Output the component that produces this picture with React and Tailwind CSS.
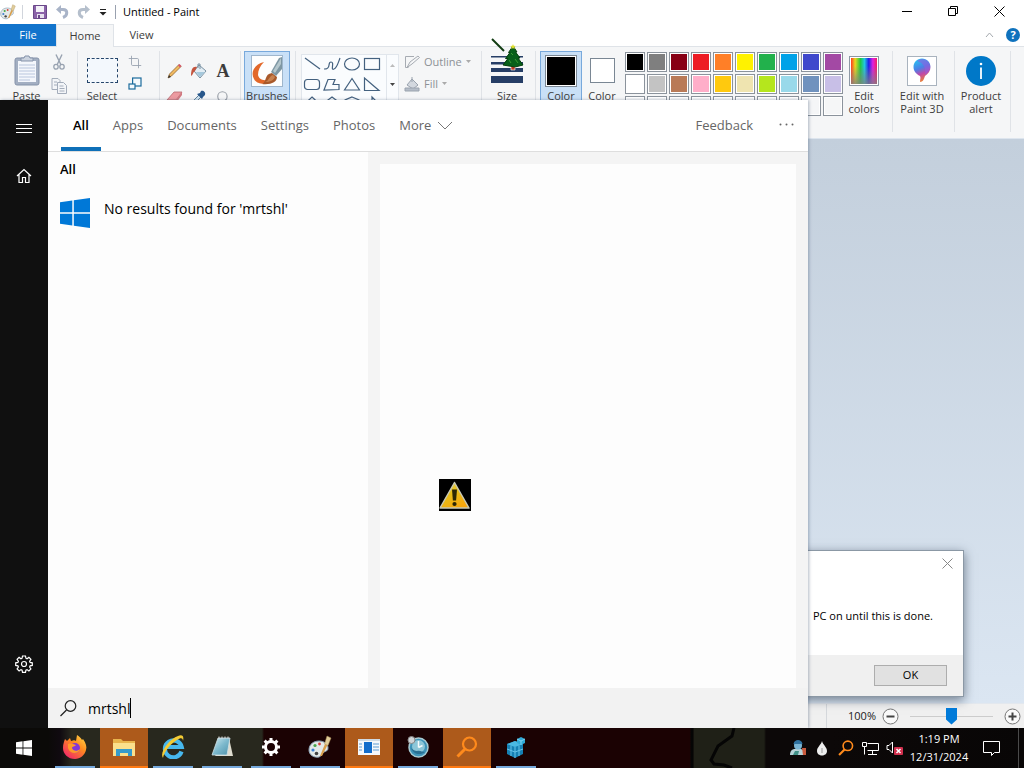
import { useState } from "react";
import { Settings, Crop, Search } from "lucide-react";

const palette = [
  ["#000000", "#7f7f7f", "#880015", "#ed1c24", "#ff7f27", "#fff200", "#22b14c", "#00a2e8", "#3f48cc", "#a349a4"],
  ["#ffffff", "#c3c3c3", "#b97a57", "#ffaec9", "#ffc90e", "#efe4b0", "#b5e61d", "#99d9ea", "#7092be", "#c8bfe7"],
  ["#f5f6f7", "#f5f6f7", "#f5f6f7", "#f5f6f7", "#f5f6f7", "#f5f6f7", "#f5f6f7", "#f5f6f7", "#f5f6f7", "#f5f6f7"],
];

const searchTabs = ["All", "Apps", "Documents", "Settings", "Photos"];

/* ---------- small drawings ---------- */

function WindowsLogo({ className }) {
  return (
    <svg viewBox="0 0 30 30" className={className} fill="currentColor">
      <path d="M0 4.2 12.3 2.5V14.2H0zM13.8 2.3 30 0V14.2H13.8zM0 15.8H12.3V27.5L0 25.8zM13.8 15.8H30V30L13.8 27.7z" />
    </svg>
  );
}

function PaintIcon({ className }) {
  return (
    <svg viewBox="0 0 24 24" className={className}>
      <path d="M1 15C1 9 6 6 11 6c5 0 9 3 9 7 0 3-2 3-4 4-2 1-2 4-5 5C6 23 1 20 1 15z" fill="#e4e9e8" stroke="#8ba2b5" />
      <circle cx="5" cy="15" r="1.6" fill="#3d7fd0" />
      <circle cx="7" cy="10.5" r="1.6" fill="#4aa64c" />
      <circle cx="11.500" cy="9" r="1.4" fill="#d8423c" />
      <circle cx="8.500" cy="18.500" r="1.8" fill="#444" />
      <path d="M12 21 17 9l2.500 1-5.500 11z" fill="#d99f4c" />
      <path d="M16.500 9 19 1l4 2-3 7.500z" fill="#e0cd9a" stroke="#a98c55" strokeWidth=".5" />
    </svg>
  );
}

function PasteIcon() {
  return (
    <svg width="26" height="32" viewBox="0 0 26 32">
      <rect x="1" y="3" width="24" height="27" rx="2" fill="#a3afc2" stroke="#8593aa" />
      <rect x="4" y="6" width="18" height="21" fill="#f4f7fc" />
      <path d="M5 10h16M5 13h16M5 16h16M5 19h16M5 22h16M5 25h11" stroke="#b9c6dd" />
      <path d="M7 6V3h3l1-2h4l1 2h3v3z" fill="#cbd3df" stroke="#8593aa" />
    </svg>
  );
}

function CutIcon() {
  return (
    <svg width="12" height="16" viewBox="0 0 12 16" fill="none" stroke="#98a2b0">
      <path d="M3 .5 8 11M9 .5 4 11" strokeWidth="1.400" />
      <ellipse cx="3" cy="12.800" rx="2.200" ry="2.400" strokeWidth="1.300" />
      <ellipse cx="9" cy="12.800" rx="2.200" ry="2.400" strokeWidth="1.300" />
    </svg>
  );
}

function CopyIcon() {
  return (
    <svg width="16" height="16" viewBox="0 0 16 16" fill="#f3f5f8" stroke="#a3acba">
      <path d="M1 .5h6l2 2v9H1z" />
      <path d="M6.500 4.500h6l3 3v8h-9z" />
      <path d="M8.500 8h4M8.500 10.500h5M8.500 13h5M3 4h3M3 7h3" />
    </svg>
  );
}

function ResizeIcon() {
  return (
    <svg width="14" height="14" viewBox="0 0 14 14" fill="#f5f9fd" stroke="#1b6b9c" strokeWidth="1.2">
      <rect x="4.600" y="1" width="8.400" height="8" />
      <rect x="1" y="7" width="6" height="5" />
    </svg>
  );
}

function PencilIcon() {
  return (
    <svg width="16" height="16" viewBox="0 0 16 16">
      <path d="M1 15 2.500 11 12 1.500l2 2L4.500 13z" fill="#f0b960" stroke="#8f6530" strokeWidth=".8" />
      <path d="M11 2.500l2 2 1.500-1.500-2-2z" fill="#d6566c" />
      <path d="M1 15l1-3 2 2z" fill="#333" />
    </svg>
  );
}

function BucketIcon() {
  return (
    <svg width="18" height="16" viewBox="0 0 18 16">
      <path d="M9 2 16 8 10 15 4 8z" fill="#e2edf4" stroke="#7890a1" />
      <path d="M6 9h9l-5 5z" fill="#a5c8dc" />
      <path d="M8 5V1h2v5" fill="none" stroke="#7890a1" />
      <path d="M7 4C3 3 1 6 1 13c2-1 2-4 4-5z" fill="#c4553f" />
    </svg>
  );
}

function EraserIcon() {
  return (
    <svg width="18" height="14" viewBox="0 0 18 14">
      <path d="M1 10 8 2h8l-6 8z" fill="#ec9aa0" stroke="#b96a70" strokeWidth=".8" />
      <path d="M1 10h9v3H1zM10 10l6-8v3l-6 8z" fill="#d2777f" />
    </svg>
  );
}

function PickerIcon() {
  return (
    <svg width="14" height="14" viewBox="0 0 14 14">
      <path d="M1 13 2 10 7 5l2 2-5 5z" fill="#cfe4f2" stroke="#62829a" />
      <path d="M5 4 10 9 11 7l2-2c1-3-2-5-4-4L8 3z" fill="#28578b" />
    </svg>
  );
}

function BrushIcon() {
  return (
    <svg width="32" height="32" viewBox="0 0 32 32">
      <rect x=".5" y=".5" width="31" height="31" fill="#fdfefe" stroke="#9fb6cc" />
      <path d="M13 7C4 9-1 17 3 24c3 6 12 6 16 1-5 1-11 0-12-5 0-5 2-9 6-13z" fill="#e2682a" />
      <path d="M11 29c5-2 2-10 10-11l5 4c0 5-6 8-15 7z" fill="#a8592a" />
      <path d="M14 27c4-1 4-6 8-7l2 2c-1 3-5 5-10 5z" fill="#c98350" />
      <path d="M20 17 28 3l3-1v12l-6 7z" fill="#7e97a3" />
      <path d="M22 16 30 3v6l-6 9z" fill="#b5c7cd" />
    </svg>
  );
}

function ShapeGallery() {
  return (
    <svg width="84" height="66" viewBox="0 0 84 66" fill="none" stroke="#44617f" strokeWidth="1.200">
      <path d="M3 3 18 14" />
      <path d="M22 14c8 0 3-7 7-7 4 0-1 9 3 7 3-1 4-6 6-11" />
      <ellipse cx="50" cy="9" rx="7.500" ry="6" />
      <rect x="62.500" y="3.500" width="15" height="11" />
      <rect x="2.500" y="24.500" width="15" height="10" rx="3" />
      <path d="M22 35 26 24.500h7l-2 5h6v5z" />
      <path d="M50 23.500 57.500 35H42.500z" />
      <path d="M62.500 23V35.500H77z" />
      <path d="M10 42 17 48.500 10 55 3 48.500zM30 42l8 6-3 8h-10l-3-8zM50 42l7 3v8l-7 3-7-3v-8zM62 46h8v-4l7 7-7 7v-4h-8z" />
    </svg>
  );
}

function SizeIcon() {
  return (
    <svg width="34" height="30" viewBox="0 0 34 30" fill="#263e66">
      <path d="M1 0H33V1.500H1zM1 6H33V8.500H1zM1 12H33V16H1zM1 20H33V27H1z" />
    </svg>
  );
}

function RainbowIcon() {
  return (
    <svg width="30" height="30" viewBox="0 0 30 30">
      <defs>
        <linearGradient id="hues">
          <stop offset="0" stopColor="#ff3a20" />
          <stop offset=".16" stopColor="#e8d820" />
          <stop offset=".36" stopColor="#20c840" />
          <stop offset=".52" stopColor="#20c8e0" />
          <stop offset=".68" stopColor="#2020e8" />
          <stop offset=".84" stopColor="#e020e0" />
          <stop offset="1" stopColor="#f02060" />
        </linearGradient>
        <linearGradient id="fade" x2="0" y2="1">
          <stop offset=".3" stopColor="#808080" stopOpacity="0" />
          <stop offset="1" stopColor="#808080" stopOpacity=".8" />
        </linearGradient>
      </defs>
      <rect x=".5" y=".5" width="29" height="29" fill="#fff" stroke="#8d98a5" />
      <rect x="2" y="2" width="26" height="26" fill="url(#hues)" />
      <rect x="2" y="2" width="26" height="26" fill="url(#fade)" />
    </svg>
  );
}

function Paint3DIcon() {
  return (
    <svg width="30" height="30" viewBox="0 0 30 30">
      <defs>
        <linearGradient id="drop" x1=".3" x2=".6" y2="1">
          <stop offset="0" stopColor="#27c3f1" />
          <stop offset=".4" stopColor="#4d7fe6" />
          <stop offset=".65" stopColor="#c248a8" />
          <stop offset="1" stopColor="#f08a24" />
        </linearGradient>
      </defs>
      <rect x=".5" y=".5" width="29" height="29" fill="#fff" stroke="#a9b3be" />
      <path d="M15 2.500c5 0 8.500 4 8.500 8.500 0 4-2.500 7-5.500 9-1 3-2 6-5 6 0-3 1-4 0-6-4-2-6.500-5-6.500-9 0-4.500 3.500-8.500 8.500-8.500z" fill="url(#drop)" />
      <path d="M15 3c5 0 8 4 8 8 0 3-2 6-5 8 1-7-1-12-8-14 1-1 3-2 5-2z" fill="#8f5fe0" opacity=".6" />
    </svg>
  );
}

function TreePointer() {
  return (
    <svg width="36" height="34" viewBox="0 0 36 34">
      <path d="M1 1 13 13" stroke="#123d12" strokeWidth="2" />
      <path d="M20 28h4v4h-4z" fill="#c23a24" stroke="#fff" strokeWidth=".6" />
      <path d="M22 8 26 14 24.500 14 29 20 27 20 32 27 24 29 12 27 17 20.500 14.500 20.500 19 14.500 17.500 14.500z" fill="#07601a" stroke="#043f0c" />
      <path d="M20 15l2 2M18 22l2 3M24 21l3 4" stroke="#3a9c34" />
      <path d="M22 6l.7 1.800 2 .2-1.500 1.200.5 2-1.700-1.200-1.700 1.200.5-2-1.500-1.200 2-.2z" fill="#dede2c" />
    </svg>
  );
}

function WarningIcon() {
  return (
    <svg width="32" height="32" viewBox="0 0 32 32">
      <defs>
        <linearGradient id="amber" x2=".6" y2="1">
          <stop offset="0" stopColor="#dfd35c" />
          <stop offset=".5" stopColor="#e8bd18" />
          <stop offset="1" stopColor="#f6a70d" />
        </linearGradient>
      </defs>
      <rect width="32" height="32" fill="#000" />
      <path d="M15.500 3.500 30 29H1z" fill="url(#amber)" stroke="#c9c9b4" strokeWidth="1.500" strokeLinejoin="round" />
      <path d="M13 10.500h5l-.9 11h-3.200z" fill="#2b2604" />
      <circle cx="15.500" cy="25" r="2.100" fill="#2b2604" />
    </svg>
  );
}

/* ---------- taskbar drawings ---------- */

function FirefoxIcon() {
  return (
    <svg viewBox="0 0 24 24" className="size-6">
      <defs>
        <linearGradient id="fox" x1="1" x2=".2" y2="1">
          <stop offset="0" stopColor="#ffe14a" />
          <stop offset=".45" stopColor="#ff8a1f" />
          <stop offset="1" stopColor="#f0246c" />
        </linearGradient>
      </defs>
      <path d="M2 4l2 2 3-3 1 3c3-1 4-1 5 0l1-6c2 1 4 3 5 5l1-1c3 4 4 8 3 11-1 5-6 9-11 9C5 24 0 19 0 13c0-4 1-6 2-9z" fill="url(#fox)" />
      <circle cx="12" cy="13" r="5" fill="#8436d8" />
      <path d="M5 9c3-1 5 0 8 1-1 2-4 1-4 3 1 3 5 4 8 1-1 5-10 6-12-1z" fill="#ff9a2a" />
    </svg>
  );
}

function FolderIcon() {
  return (
    <svg viewBox="0 0 24 20" className="w-6">
      <path d="M1 2h8l2 2h12v15H1z" fill="#e9b44c" />
      <path d="M1 6h22v13H1z" fill="#fbe08c" />
      <path d="M4 19v-7h16v7h-4v-3H8v3z" fill="#359bcb" />
    </svg>
  );
}

function IeIcon() {
  return (
    <svg viewBox="0 0 24 24" className="size-6" fill="none">
      <path d="M20.500 16.500A8.500 8.500 0 1 1 20.700 12H6" stroke="#47b8ee" strokeWidth="4.200" />
      <path d="M2 23C-2 18 8 4 17 1c5-2 6 1 5 5 0-3-2-4-6-1C9 9 3 17 2 23z" fill="#f3cb35" />
    </svg>
  );
}

function NotepadIcon() {
  return (
    <svg viewBox="0 0 24 24" className="size-6">
      <defs>
        <linearGradient id="page" x1="0" x2="1" y2="1">
          <stop offset="0" stopColor="#d3ebf0" />
          <stop offset=".5" stopColor="#7db9cd" />
          <stop offset="1" stopColor="#4d92ab" />
        </linearGradient>
      </defs>
      <path d="M19 3l4 18H5z" fill="#dedccf" />
      <path d="M8 3h12l-3 17H2z" fill="url(#page)" stroke="#cfe0e4" strokeWidth=".8" />
      <path d="M9 1.500v2M12 1.500v2M15 1.500v2M18 1.500v2" stroke="#ddd" />
    </svg>
  );
}

function GearSolid() {
  return (
    <svg viewBox="0 0 20 20" className="size-5" fill="none" stroke="#fff">
      <circle cx="10" cy="10" r="5.500" strokeWidth="3" />
      <path d="M10 1v3M10 16v3M1 10h3M16 10h3M3.600 3.600l2.400 2.400M14 14l2.400 2.400M16.400 3.600l-2.400 2.400M3.600 16.400l2.400-2.400" strokeWidth="3" />
    </svg>
  );
}

function RunIcon() {
  return (
    <svg viewBox="0 0 22 16" className="w-[22px]">
      <rect width="22" height="16" fill="#f5f8fb" />
      <path d="M0 1h22" stroke="#cfd9e2" strokeWidth="2" />
      <rect x="6" y="3" width="8" height="11" fill="#136dcb" />
      <path d="M15 5h6M15 8h6M15 11h6M1 5h3M1 8h3M1 11h3" stroke="#5d9bd2" />
    </svg>
  );
}

function GlobeIcon() {
  return (
    <svg viewBox="0 0 22 22" className="size-[22px]">
      <circle cx="11.500" cy="11.500" r="9.500" fill="#3d93b8" stroke="#a9cbd3" strokeWidth="1.500" />
      <circle cx="11.500" cy="10.500" r="6.500" fill="#8cc6d8" />
      <path d="M11.500 11.500V5M11.500 11.500l4-2" stroke="#f4fbfc" strokeWidth="1.500" />
      <path d="M4 12c2 6 9 8 14 4-3 0-5-2-8-1-2 0-4-1-6-3z" fill="#2a6f92" />
      <circle cx="4.500" cy="4" r="3.500" fill="#cfd3d6" stroke="#888" />
    </svg>
  );
}

function Magnifier({ className }) {
  return (
    <svg viewBox="0 0 22 22" className={className} fill="none" stroke="#ff8a1c">
      <circle cx="13.500" cy="8" r="6.500" strokeWidth="2.200" />
      <path d="M9 13 1.500 20.500" strokeWidth="3" />
    </svg>
  );
}

function RegistryIcon() {
  return (
    <svg viewBox="0 0 22 22" className="size-[22px]">
      <path d="M2 8 10 5 18 8v10l-8 4-8-4z" fill="#1580b4" />
      <path d="M2 8l8 3 8-3-8-3z" fill="#4ab8e2" />
      <path d="M10 11v11M2 13l8 3 8-3M6 9.500v10.500M14 9.500v10.500" stroke="#66c4ea" fill="none" />
      <path d="M12 3l4-2 4 2v4l-4 2-4-2z" fill="#30a9d6" />
      <path d="M12 3l4 2 4-2M16 5v4" stroke="#93dcf5" fill="none" strokeWidth=".8" />
    </svg>
  );
}

const apps = [
  { name: "Firefox", icon: <FirefoxIcon /> },
  { name: "File Explorer", icon: <FolderIcon />, active: true },
  { name: "Internet Explorer", icon: <IeIcon /> },
  { name: "Notepad", icon: <NotepadIcon /> },
  { name: "Settings", icon: <GearSolid /> },
  { name: "Paint", icon: <PaintIcon className="size-6" /> },
  { name: "Run", icon: <RunIcon />, active: true },
  { name: "Internet Options", icon: <GlobeIcon /> },
  { name: "Search", icon: <Magnifier className="size-[22px]" />, active: true },
  { name: "Registry Editor", icon: <RegistryIcon /> },
];

/* ---------- paint window ---------- */

function TitleBar() {
  return (
    <header className="flex h-6 items-center bg-white">
      <PaintIcon className="size-4 shrink-0" />
      <span className="ml-1.5 h-3.5 w-px bg-gray-300" />
      <button aria-label="Save" className="ml-2.5">
        <svg width="14" height="14" viewBox="0 0 14 14">
          <path d="M.5.500h13v13H.5z" fill="#8a62a8" stroke="#6a4789" />
          <path d="M3 1h8v6H3z" fill="#f3f1f8" />
          <path d="M4 9h7v4H4z" fill="#e6e0ee" />
          <path d="M5 10h2v3H5z" fill="#6a4789" />
        </svg>
      </button>
      <button aria-label="Undo" className="ml-2">
        <svg width="14" height="14" viewBox="0 0 14 14" fill="none" stroke="#a9b4c8" strokeWidth="3">
          <path d="M3 4.500h5c5 0 5 6 0 8" />
          <path d="M6 0 1 4.500 6 9z" fill="#a9b4c8" stroke="none" />
        </svg>
      </button>
      <button aria-label="Redo" className="ml-2">
        <svg width="14" height="14" viewBox="0 0 14 14" fill="none" stroke="#b5bfcc" strokeWidth="3">
          <path d="M11 4.500H6c-5 0-5 6 0 8" />
          <path d="M8 0l5 4.500L8 9z" fill="#b5bfcc" stroke="none" />
        </svg>
      </button>
      <button aria-label="Customize Quick Access Toolbar" className="ml-2">
        <svg width="8" height="8" viewBox="0 0 8 8">
          <path d="M1 1.500h6" stroke="#222" />
          <path d="M.5 4h7L4 7.500z" fill="#222" />
        </svg>
      </button>
      <span className="ml-2 h-3.5 w-px bg-gray-400" />
      <h1 className="ml-[7px] text-[11px] text-black">Untitled - Paint</h1>
      <div className="ml-auto flex pr-0.5">
        <button aria-label="Minimize" className="flex h-6 w-[46px] items-center justify-center">
          <svg width="10" height="10" viewBox="0 0 10 10"><path d="M0 4.500h10" stroke="#000" /></svg>
        </button>
        <button aria-label="Restore" className="flex h-6 w-[46px] items-center justify-center">
          <svg width="10" height="12" viewBox="0 0 10 12" fill="none" stroke="#000">
            <path d="M.5 2.500h7v7h-7zM2.500 2.500v-2h7v7h-2" />
          </svg>
        </button>
        <button aria-label="Close" className="flex h-6 w-[46px] items-center justify-center">
          <svg width="11" height="13" viewBox="0 0 11 13"><path d="M.5.500l10 10M10.500.500l-10 10" stroke="#000" /></svg>
        </button>
      </div>
    </header>
  );
}

function RibbonTabs() {
  return (
    <nav className="flex h-[23px] items-stretch border-b border-[#dfe3e8] bg-white text-[11px] text-[#3c3c3c]">
      <button className="w-14 bg-[#1274cc] text-white">File</button>
      <button className="-mb-px w-[58px] border border-b-0 border-[#dfe3e8] bg-[#f5f6f7]">Home</button>
      <button className="w-[55px]">View</button>
      <div className="ml-auto flex items-center gap-3 pr-1">
        <svg width="9" height="6" viewBox="0 0 9 6" fill="none" stroke="#a4a9ae"><path d="M1 5 4.500 1 8 5" /></svg>
        <button aria-label="Help" className="flex size-3.5 items-center justify-center rounded-full bg-[#0f72bd] text-[11px] leading-3 font-bold text-white">
          ?
        </button>
      </div>
    </nav>
  );
}

function Group({ className, children }) {
  return <div className={`flex h-[81px] shrink-0 items-start border-r border-[#e0e3e7] ${className}`}>{children}</div>;
}

function BigButton({ icon, label, className, selected }) {
  return (
    <button
      className={`flex h-[70px] shrink-0 flex-col items-center border text-center text-[11px] leading-[13px] ${
        selected ? "border-[#78a9dc] bg-[#c9e0f7]" : "border-transparent"
      } ${className}`}>
      <span className="flex h-[37px] shrink-0 items-center">{icon}</span>
      {label}
    </button>
  );
}

function Ribbon() {
  return (
    <div className="flex h-[92px] overflow-hidden border-b border-[#dde5ee] bg-[#f5f6f7] pt-1 text-[#3c3c3c]">
      <Group className="w-[78px] pl-1">
        <BigButton icon={<PasteIcon />} label="Paste" className="w-[45px]" />
        <div className="flex flex-col items-center gap-2 pt-[3px] pl-0.5">
          <CutIcon />
          <CopyIcon />
        </div>
      </Group>

      <Group className="w-[82px] pl-0.5">
        <BigButton
          icon={<span className="h-[25px] w-[31px] border border-dashed border-[#26466b] bg-[#f3f8fd]" />}
          label="Select"
          className="w-11"
        />
        <div className="flex flex-col items-center gap-2 pt-1 pl-1">
          <Crop className="size-3.5 text-[#98a2b0]" strokeWidth={1.5} />
          <ResizeIcon />
        </div>
      </Group>

      <Group className="w-[81px] pl-[3px]">
        <div className="grid grid-cols-3 pt-[7px]">
          <button aria-label="Pencil" className="flex h-[26px] w-6 items-center justify-center"><PencilIcon /></button>
          <button aria-label="Fill with color" className="flex h-[26px] w-6 items-center justify-center"><BucketIcon /></button>
          <button aria-label="Text" className="flex h-[26px] w-6 items-center justify-center font-['Liberation_Serif',serif] text-lg font-bold">A</button>
          <button aria-label="Eraser" className="flex h-[26px] w-6 items-center justify-center"><EraserIcon /></button>
          <button aria-label="Color picker" className="flex h-[26px] w-6 items-center justify-center"><PickerIcon /></button>
          <button aria-label="Magnifier" className="flex h-[26px] w-6 items-center justify-center">
            <Search className="size-3.5 text-[#9aa0a8]" />
          </button>
        </div>
      </Group>

      <Group className="w-[55px] pl-[3px]">
        <BigButton icon={<BrushIcon />} label="Brushes" className="w-[46px]" selected />
      </Group>

      <Group className="w-[186px] pl-[5px]">
        <div className="mt-[3px] flex border border-[#e1e6ec] bg-[#fafcfe]">
          <ShapeGallery />
          <div className="flex w-3 flex-col items-center gap-4 border-l border-[#e1e6ec] pt-2 text-[#555]">
            <svg width="5" height="4" viewBox="0 0 5 4" fill="#bbb"><path d="M0 4 2.500 1 5 4z" /></svg>
            <svg width="5" height="4" viewBox="0 0 5 4" fill="#444"><path d="M0 0h5L2.500 3z" /></svg>
          </div>
        </div>
        <div className="flex flex-col pl-[5px] text-[11px] text-[#8d9196]">
          <button className="flex h-[22px] items-center gap-1">
            <svg width="16" height="14" viewBox="0 0 16 14" fill="none" stroke="#a6abb2">
              <path d="M10 1.500H1.500v11h3M3 12.500 6 7l8-6 1.500 1.500L8 9z" />
            </svg>
            Outline
            <svg width="5" height="4" viewBox="0 0 5 4" fill="#aaa"><path d="M0 0h5L2.500 3z" /></svg>
          </button>
          <button className="flex h-[22px] items-center gap-1">
            <svg width="16" height="15" viewBox="0 0 16 15" fill="#d3d8df" stroke="#9aa3ae">
              <path d="M8 2 14 8 9 12 3 8z" />
              <path d="M1 11h14v3H1z" fill="#b5bdc8" />
              <path d="M8 5V0" />
            </svg>
            Fill
            <svg width="5" height="4" viewBox="0 0 5 4" fill="#aaa"><path d="M0 0h5L2.500 3z" /></svg>
          </button>
        </div>
      </Group>

      <Group className="w-[54px] pl-0.5">
        <BigButton icon={<SizeIcon />} label="Size" className="w-[46px]" />
      </Group>

      <Group className="w-[357px] pl-1">
        <BigButton
          icon={
            <span className="size-8 border border-[#7a8794] bg-white p-px">
              <span className="block size-full bg-black" />
            </span>
          }
          label="Color"
          className="w-[42px]"
          selected
        />
        <BigButton
          icon={<span className="size-[25px] border border-[#7a8794] bg-white" />}
          label="Color"
          className="w-10"
        />
        <div className="ml-[3px] grid grid-cols-10 gap-0.5 pt-px">
          {palette.flat().map((color, i) => (
            <button
              key={i}
              aria-label={`Color ${color}`}
              className="size-5 border border-[#8b939c] bg-white p-px">
              <span className="block size-full" style={{ backgroundColor: color }} />
            </button>
          ))}
        </div>
        <BigButton icon={<RainbowIcon />} label="Edit colors" className="w-[42px]" />
      </Group>

      <Group className="w-[62px]">
        <BigButton icon={<Paint3DIcon />} label="Edit with Paint 3D" className="w-[58px]" />
      </Group>

      <Group className="w-14">
        <BigButton
          icon={
            <svg width="30" height="30" viewBox="0 0 30 30">
              <circle cx="15" cy="15" r="15" fill="#0078c8" />
              <circle cx="15" cy="8" r="1.300" fill="#fff" />
              <path d="M15 11.500V23" stroke="#fff" strokeWidth="1.800" />
            </svg>
          }
          label="Product alert"
          className="w-[52px]"
        />
      </Group>
    </div>
  );
}

function Dialog() {
  return (
    <div
      role="dialog"
      aria-label="Message"
      className="absolute right-[60px] bottom-1.5 flex h-[147px] w-[380px] flex-col border border-[#8b98a5] bg-white text-[11px] text-black shadow-[0_3px_10px_rgba(40,55,75,0.6)]">
      <div className="flex h-6 items-center justify-end pr-2.5">
        <button aria-label="Close">
          <svg width="11" height="11" viewBox="0 0 11 11"><path d="M.5.500l10 10M10.500.500l-10 10" stroke="#888" /></svg>
        </button>
      </div>
      <p className="flex-1 pt-[33px] pr-[30px] text-right">PC on until this is done.</p>
      <div className="flex h-[41px] items-center justify-end bg-[#f0f0f0] pr-4">
        <button className="h-[21px] w-[73px] border border-[#adadad] bg-[#e1e1e1]">OK</button>
      </div>
    </div>
  );
}

function StatusBar() {
  const [zoom, setZoom] = useState(50);
  return (
    <footer className="flex h-[25px] items-center justify-end border-t border-[#e3e8ee] bg-[#f0f0f0] pr-[3px] text-xs text-[#222]">
      <span className="mr-[21px] h-full w-px bg-[#d5d8dc]" />
      <label htmlFor="zoom" className="text-[11px]">100%</label>
      <button aria-label="Zoom out" className="ml-1.5">
        <svg width="17" height="17" viewBox="0 0 17 17" fill="#fafafa" stroke="#777">
          <circle cx="8.500" cy="8.500" r="7.500" />
          <path d="M4.500 8.500h8" stroke="#444" strokeWidth="2" />
        </svg>
      </button>
      <input
        id="zoom"
        type="range"
        value={zoom}
        onChange={(e) => setZoom(e.target.value)}
        className="mx-[11px] h-[18px] w-[83px] appearance-none bg-[linear-gradient(#ccc,#ccc)] bg-[length:100%_1px] bg-center bg-no-repeat [&::-webkit-slider-thumb]:h-[17px] [&::-webkit-slider-thumb]:w-[11px] [&::-webkit-slider-thumb]:appearance-none [&::-webkit-slider-thumb]:bg-[#007ad9] [&::-webkit-slider-thumb]:[clip-path:polygon(0_0,100%_0,100%_70%,50%_100%,0_70%)]"
      />
      <button aria-label="Zoom in">
        <svg width="17" height="17" viewBox="0 0 17 17" fill="#fafafa" stroke="#777">
          <circle cx="8.500" cy="8.500" r="7.500" />
          <path d="M4.500 8.500h8M8.500 4.500v8" stroke="#444" strokeWidth="2" />
        </svg>
      </button>
    </footer>
  );
}

/* ---------- search flyout ---------- */

function SearchPanel() {
  const [query, setQuery] = useState("mrtshl");

  return (
    <section className="absolute top-[100px] bottom-0 left-0 flex w-[808px] shadow-[1px_0_3px_rgba(60,80,110,0.4)]">
      <aside className="flex w-12 flex-col bg-[#101010] pt-1 pb-10 text-white">
        <button aria-label="Menu" className="flex size-12 items-center justify-center">
          <svg width="16" height="10" viewBox="0 0 16 10" stroke="#fff"><path d="M0 1.500h16M0 5.500h16M0 9.500h16" /></svg>
        </button>
        <button aria-label="Home" className="flex size-12 items-center justify-center">
          <svg width="16" height="16" viewBox="0 0 16 16" fill="none" stroke="#fff" strokeWidth="1.200">
            <path d="M1 8 8 1.500 15 8M3 6.500v8h3.500v-5h3v5H13v-8" />
          </svg>
        </button>
        <button aria-label="Settings" className="mt-auto flex size-12 items-center justify-center">
          <svg width="18" height="18" viewBox="0 0 18 18" fill="none" stroke="#fff" strokeWidth="1.200">
            <path d="M7.500 1h3l.4 2.200 1.100.5 1.900-1.300 2 2-1.300 1.900.5 1.100 2.200.4v2.600l-2.200.4-.5 1.200 1.300 1.900-2 2-1.900-1.300-1.100.5-.4 2.200h-3l-.4-2.200-1.100-.5-1.900 1.300-2-2 1.300-1.900-.5-1.200L.7 10.400V7.800l2.200-.4.500-1.100-1.300-1.900 2-2L6 3.700l1.100-.5z" />
            <circle cx="9" cy="9" r="2.500" />
          </svg>
        </button>
      </aside>

      <div className="flex flex-1 flex-col bg-[#f4f4f4]">
        <nav className="flex h-[52px] items-stretch border-b border-[#dedede] bg-white pl-[13px] text-[13px] text-[#666]">
          {searchTabs.map((tab) => (
            <button
              key={tab}
              className={`border-b-4 px-3 pt-1 ${
                tab === "All" ? "border-[#0f70b8] font-semibold text-black" : "border-transparent"
              }`}>
              {tab}
            </button>
          ))}
          <button className="flex items-center gap-1.5 px-3">
            More
            <svg width="16" height="9" viewBox="0 0 16 9" fill="none" stroke="#777"><path d="M1 1l7 7 7-7" /></svg>
          </button>
          <button className="ml-auto">Feedback</button>
          <button aria-label="More options" className="mr-3.5 ml-[26px]">
            <svg width="15" height="5" viewBox="0 0 15 5" fill="#666">
              <circle cx="1.500" cy="1.500" r="1" /><circle cx="7.500" cy="1.500" r="1" /><circle cx="13.500" cy="1.500" r="1" />
            </svg>
          </button>
        </nav>

        <div className="flex flex-1">
          <div className="w-80 bg-[#fdfdfd] pt-2 pl-3 text-black">
            <h2 className="text-[13px] leading-[18px] font-semibold">All</h2>
            <div className="mt-5 flex gap-3.5">
              <WindowsLogo className="size-[30px] text-[#0078d7]" />
              <p className="text-[14px] leading-[22px]">No results found for 'mrtshl'</p>
            </div>
          </div>
          <div className="mx-3 mt-3 flex-1 bg-[#fdfdfd]" />
        </div>

        <div className="flex h-10 items-center bg-[#f2f2f2] pl-3">
          <svg width="17" height="17" viewBox="0 0 17 17" fill="none" stroke="#222" strokeWidth="1.200">
            <circle cx="10.500" cy="6" r="5.300" />
            <path d="M6.500 10 .500 16" />
          </svg>
          <input
            aria-label="Search"
            value={query}
            onChange={(e) => setQuery(e.target.value)}
            className="ml-[11px] field-sizing-content bg-transparent text-[14px] text-black outline-none"
          />
          <span className="h-5 w-px bg-black" />
        </div>
      </div>
    </section>
  );
}

/* ---------- taskbar ---------- */

function Taskbar() {
  return (
    <div className="relative flex h-10 items-stretch bg-[linear-gradient(90deg,#0b0a08_0_48px,#100a10_60px,#28281e_72px_262px,#1b0203_264px_690px,#1f2017_694px_764px,#0c0808_766px_830px,#080606_100%)]">
      <svg width="60" height="40" viewBox="0 0 60 40" className="absolute left-[690px]" fill="none" stroke="#050505" strokeWidth="3">
        <path d="M44 0l-2 8-14 10-7 14 3 4 10 1 8 3M2 0v40" />
      </svg>
      <button aria-label="Start" className="mr-[3px] flex w-12 items-center justify-center">
        <WindowsLogo className="size-4 text-white" />
      </button>
      <div className="flex gap-px">
        {apps.map(({ name, icon, active }) => (
          <button
            key={name}
            aria-label={name}
            className={`flex w-12 flex-col items-center ${active ? "bg-[#ad5a1b]" : ""}`}>
            <span className="flex flex-1 items-center">{icon}</span>
            <span className={active ? "h-0.5 w-full bg-[#ff7a12]" : "h-0.5 w-10 bg-[#76a9dc]"} />
          </button>
        ))}
      </div>

      <div className="relative ml-auto flex items-center text-white">
        <span className="flex w-6 justify-center">
          <svg width="17" height="16" viewBox="0 0 17 16">
            <path d="M0 15c0-4 2-6 5-6h5c3 0 5 2 5 6z" fill="#b6d2d8" />
            <circle cx="8" cy="5.500" r="4" fill="#79b4d4" />
            <path d="M3.500 4C4 1 6 0 8 0s4 1 4.500 4z" fill="#2f719f" />
            <path d="M3 15l2-4h4l-1 4z" fill="#3f8f86" />
            <path d="M12 8h4v7h-3z" fill="#c95a3d" />
          </svg>
        </span>
        <span className="flex w-6 justify-center">
          <svg width="12" height="15" viewBox="0 0 12 15">
            <path d="M6 0c1 4 5 6 5 10 0 6-10 6-10 0 0-4 4-6 5-10z" fill="#eee" />
            <path d="M6 7v5" stroke="#999" />
          </svg>
        </span>
        <span className="flex w-6 justify-center"><Magnifier className="size-4" /></span>
        <span className="flex w-6 justify-center">
          <svg width="17" height="15" viewBox="0 0 17 15" fill="none" stroke="#fff">
            <path d="M5.500 2.500h11v7h-11M10.500 9.500v4M6 13.500h9M.5 1.500h4v4h-4zM2.500 5.500v8" />
          </svg>
        </span>
        <span className="flex w-6 justify-center">
          <svg width="17" height="14" viewBox="0 0 17 14" fill="none" stroke="#fff">
            <path d="M1 4.500h2L6.500 1v11L3 8.500H1z" />
            <rect x="8" y="6" width="9" height="8" rx="1" fill="#d12f4d" stroke="none" />
            <path d="M10.500 8l4 4M14.500 8l-4 4" strokeWidth="1.500" />
          </svg>
        </span>
        <div className="w-[66px] text-center text-[11px] leading-[18px]">
          <p>1:19 PM</p>
          <p>12/31/2024</p>
        </div>
        <button aria-label="Notifications" className="flex w-[38px] justify-center">
          <svg width="17" height="17" viewBox="0 0 17 17" fill="none" stroke="#fff">
            <path d="M.5 1.500h16v11h-5l-3 3v-3h-8z" />
          </svg>
        </button>
        <span className="mr-[5px] ml-2 h-full w-px bg-[#4a4a4a]" />
      </div>
    </div>
  );
}

export default function App() {
  return (
    <div className="flex h-screen min-h-[500px] flex-col overflow-hidden font-['Open_Sans','Noto_Sans',sans-serif]">
      <main className="relative flex flex-1 flex-col">
        <TitleBar />
        <RibbonTabs />
        <Ribbon />
        <div className="relative flex-1 bg-linear-to-b from-[#c3cfdc] to-[#dbe6f2]">
          <Dialog />
        </div>
        <StatusBar />
        <SearchPanel />

        <div className="pointer-events-none absolute top-[38px] left-[491px]">
          <TreePointer />
        </div>
        <div className="absolute top-[479px] left-[439px]">
          <WarningIcon />
        </div>
      </main>
      <Taskbar />
    </div>
  );
}
